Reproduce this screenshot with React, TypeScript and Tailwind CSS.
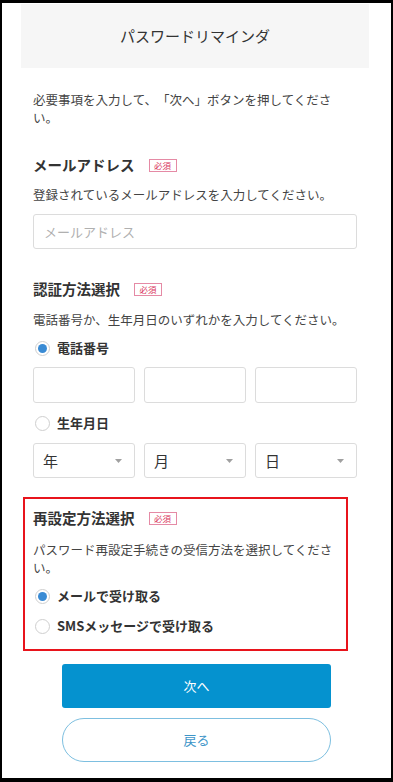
import React from "react";

const font = "font-['Noto_Sans_CJK_JP','Noto_Sans',sans-serif] [text-spacing-trim:space-all]";

function Badge() {
  return (
    <span className="ml-[14px] inline-flex h-[13px] w-[28px] items-center justify-center border border-[#e58aa5] text-[8.5px] leading-none text-[#d9365e]">
      必須
    </span>
  );
}

function Heading({ children }: { children: React.ReactNode }) {
  return (
    <div className="flex h-[22px] items-center">
      <span className="text-[14.5px] font-bold leading-[22px] text-[#333]">{children}</span>
      <Badge />
    </div>
  );
}

function Radio({ checked, label, className = "" }: { checked?: boolean; label: string; className?: string }) {
  return (
    <div className={`flex h-[20px] items-center ${className}`}>
      <span className="ml-[2px] flex h-[15px] w-[15px] items-center justify-center rounded-full border border-[#cfcfcf] bg-white">
        {checked && <span className="h-[9px] w-[9px] rounded-full bg-[#3a8bd4]" />}
      </span>
      <span className="ml-[7px] text-[13px] font-bold leading-[20px] text-[#333]">{label}</span>
    </div>
  );
}

function Select({ label }: { label: string }) {
  return (
    <div className="flex h-[35px] items-center justify-between rounded-[3px] border border-[#dcdcdc] bg-white pl-[9px] pr-[12px]">
      <span className="text-[15px] leading-none text-[#333]">{label}</span>
      <svg width="7" height="4" viewBox="0 0 7 4">
        <path d="M0 0 L7 0 L3.5 4 Z" fill="#a0a0a0" />
      </svg>
    </div>
  );
}

export default function App() {
  return (
    <div
      className={`${font} box-border h-[782px] w-[393px] overflow-hidden border-b-[4px] border-l-[2px] border-r-[2px] border-t-[3px] border-black bg-white`}
    >
      <div className="ml-[19px] mr-[22px] mt-[1px] flex h-[64px] items-center justify-center bg-[#f6f6f6]">
        <span className="text-[15px] text-[#333]">パスワードリマインダ</span>
      </div>

      <div className="pl-[31px] pr-[34px]">
        <p className="mt-[23px] pr-[14px] text-[12.5px] leading-[18px] text-[#444]">
          必要事項を入力して、「次へ」ボタンを押してください。
        </p>

        <div className="mt-[27px]">
          <Heading>メールアドレス</Heading>
        </div>
        <p className="mt-[10px] text-[12.5px] leading-[18px] text-[#444]">
          登録されているメールアドレスを入力してください。
        </p>
        <div className="mt-[10px] flex h-[35px] items-center rounded-[3px] border border-[#dcdcdc] pl-[10px]">
          <span className="text-[13px] text-[#b0b0b0]">メールアドレス</span>
        </div>

        <div className="mt-[29px]">
          <Heading>認証方法選択</Heading>
        </div>
        <p className="mt-[11px] text-[12.5px] leading-[18px] text-[#444]">
          電話番号か、生年月日のいずれかを入力してください。
        </p>
        <Radio checked label="電話番号" className="mt-[9px]" />
        <div className="mt-[9px] grid grid-cols-3 gap-[9px]">
          <div className="h-[36px] rounded-[3px] border border-[#dcdcdc]" />
          <div className="h-[36px] rounded-[3px] border border-[#dcdcdc]" />
          <div className="h-[36px] rounded-[3px] border border-[#dcdcdc]" />
        </div>
        <Radio label="生年月日" className="mt-[10px]" />
        <div className="mt-[10px] grid grid-cols-3 gap-[9px]">
          <Select label="年" />
          <Select label="月" />
          <Select label="日" />
        </div>

        <div className="-ml-[10px] mr-[9px] mt-[19px] border-2 border-[#e8141c] pb-[13px] pl-[8px] pr-0 pt-[8px]">
          <Heading>再設定方法選択</Heading>
          <p className="mt-[12px] text-[12.5px] leading-[18px] text-[#444]">
            パスワード再設定手続きの受信方法を選択してください。
          </p>
          <Radio checked label="メールで受け取る" className="mt-[9px]" />
          <Radio label="SMSメッセージで受け取る" className="mt-[10px]" />
        </div>

        <button className="ml-[29px] mt-[13px] flex h-[44px] w-[269px] items-center justify-center rounded-[3px] bg-[#0592cf] text-[13px] text-white">
          次へ
        </button>
        <button className="ml-[29px] mt-[10px] flex h-[44px] w-[269px] items-center justify-center rounded-full border-[1.5px] border-[#7dbfe0] bg-white text-[13px] text-[#3d95c8]">
          戻る
        </button>
      </div>
    </div>
  );
}
